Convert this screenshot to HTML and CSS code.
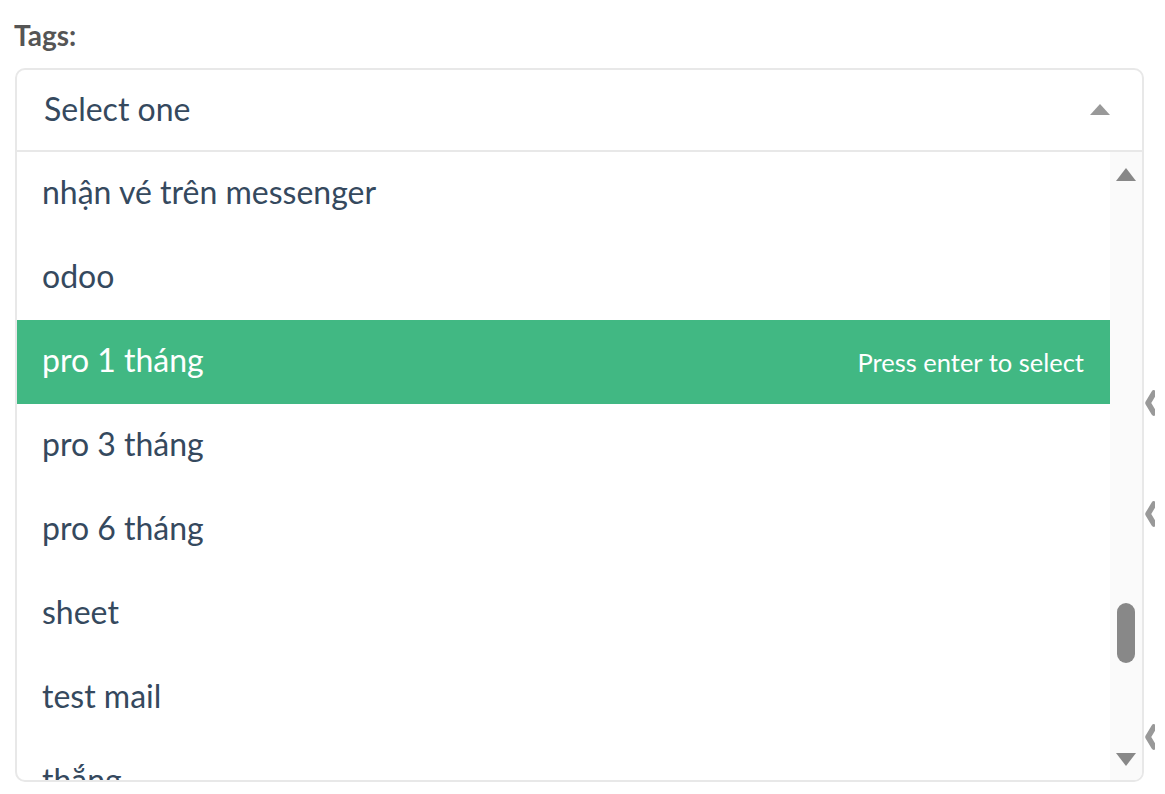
FILE: index.html
```html
<!DOCTYPE html>
<html lang="vi">
<head>
<meta charset="utf-8">
<title>Tags</title>
<link rel="stylesheet" href="styles.css">
</head>
<body>
<div class="page">
  <div class="label">Tags:</div>
  <div class="field">
    <div class="select">
      <div class="head">
        <span class="placeholder">Select one</span>
        <span class="caret"></span>
      </div>
      <div class="dropdown">
        <ul class="options">
          <li class="opt">nhận vé trên messenger</li>
          <li class="opt">odoo</li>
          <li class="opt active"><span>pro 1 tháng</span><span class="hint">Press enter to select</span></li>
          <li class="opt">pro 3 tháng</li>
          <li class="opt">pro 6 tháng</li>
          <li class="opt">sheet</li>
          <li class="opt">test mail</li>
          <li class="opt">thắng</li>
        </ul>
        <div class="scrollbar">
          <span class="arrow up"></span>
          <div class="track"><span class="thumb"></span></div>
          <span class="arrow down"></span>
        </div>
      </div>
    </div>
    <svg class="peek p1" width="10" height="26" viewBox="0 0 10 26"><polyline points="9,3 3,13 9,23" fill="none" stroke="#999" stroke-width="5.5" stroke-linecap="round" stroke-linejoin="round"/></svg>
    <svg class="peek p2" width="10" height="26" viewBox="0 0 10 26"><polyline points="9,3 3,13 9,23" fill="none" stroke="#999" stroke-width="5.5" stroke-linecap="round" stroke-linejoin="round"/></svg>
    <svg class="peek p3" width="10" height="26" viewBox="0 0 10 26"><polyline points="9,3 3,13 9,23" fill="none" stroke="#999" stroke-width="5.5" stroke-linecap="round" stroke-linejoin="round"/></svg>
  </div>
</div>
</body>
</html>
```
FILE: styles.css
```css
html, body {
  margin: 0;
  padding: 0;
  background: #fff;
}
* {
  box-sizing: border-box;
}
.page {
  padding: 18px 21px 0 15px;
  font-family: Lato, "Noto Sans", sans-serif;
}
.label {
  font-weight: 700;
  font-size: 28px;
  line-height: 35px;
  color: #555;
  margin: 0 0 15px -1px;
}
.field {
  position: relative;
}
.select {
  border: 2px solid #e8e8e8;
  border-radius: 10px;
  overflow: hidden;
  height: 714px;
  display: flex;
  flex-direction: column;
}
.head {
  height: 82px;
  flex: none;
  border-bottom: 2px solid #e8e8e8;
  display: flex;
  align-items: center;
  padding: 0 32px 4px 27px;
}
.placeholder {
  flex: 1;
  font-size: 32px;
  color: #35495e;
}
.caret {
  width: 0;
  height: 0;
  border-left: 10px solid transparent;
  border-right: 10px solid transparent;
  border-bottom: 11px solid #999;
  margin-top: 2px;
}
.dropdown {
  flex: 1;
  display: flex;
  min-height: 0;
}
.options {
  list-style: none;
  margin: 0;
  padding: 0;
  flex: 1;
  overflow: hidden;
}
.opt {
  height: 84px;
  display: flex;
  align-items: center;
  justify-content: space-between;
  padding: 0 26px 5px 25px;
  font-size: 32px;
  color: #35495e;
}
.opt.active {
  background: #41b883;
  color: #fff;
}
.hint {
  font-size: 25.5px;
  padding-top: 4px;
}
.scrollbar {
  width: 32px;
  flex: none;
  background: #fafafa;
  display: flex;
  flex-direction: column;
  align-items: center;
  padding: 16px 0 14px;
}
.arrow {
  width: 0;
  height: 0;
  border-left: 10px solid transparent;
  border-right: 10px solid transparent;
}
.arrow.up {
  border-bottom: 13px solid #888;
}
.arrow.down {
  border-top: 13px solid #888;
}
.track {
  flex: 1;
  display: flex;
  flex-direction: column;
  justify-content: flex-end;
  padding-bottom: 90px;
}
.thumb {
  display: block;
  width: 18px;
  height: 60px;
  border-radius: 9px;
  background: #888;
}
.peek {
  position: absolute;
  left: 1130px;
}
.p1 { top: 322px; }
.p2 { top: 433px; }
.p3 { top: 656px; }
```
